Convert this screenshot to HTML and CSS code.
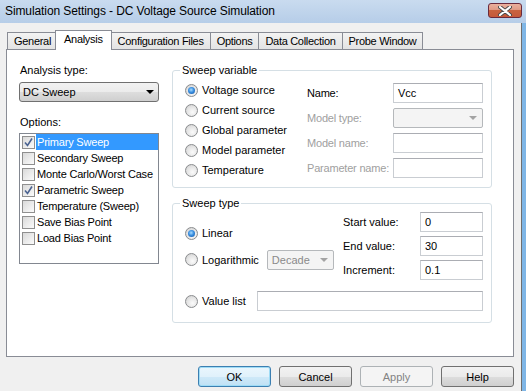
FILE: index.html
```html
<!DOCTYPE html>
<html lang="en">
<head>
  <meta charset="UTF-8">
  <title>Simulation Settings - DC Voltage Source Simulation</title>
  <link rel="stylesheet" href="styles.css">
</head>
<body>
  <div class="window">
    <!-- Title bar -->
    <div class="titlebar">
      <span class="title">Simulation Settings - DC Voltage Source Simulation</span>
      <div class="close">
        <svg width="14" height="10" viewBox="0 0 14 10">
          <path d="M2,1 L12,9 M12,1 L2,9" stroke="#4a4a4a" stroke-width="4" stroke-linecap="round"/>
          <path d="M2,1 L12,9 M12,1 L2,9" stroke="#fff" stroke-width="2.2" stroke-linecap="round"/>
        </svg>
      </div>
    </div>

    <div class="client">
      <!-- Tabs -->
      <div class="tabs">
        <div class="tab">General</div>
        <div class="tab active">Analysis</div>
        <div class="tab">Configuration Files</div>
        <div class="tab">Options</div>
        <div class="tab">Data Collection</div>
        <div class="tab">Probe Window</div>
      </div>

      <div class="panel">
        <!-- Left column -->
        <div class="left">
          <span class="caption">Analysis type:</span>
          <div class="select">
            <span>DC Sweep</span>
            <svg width="8" height="4" viewBox="0 0 8 4"><path d="M0,0 L8,0 L4,4 Z" fill="#000"/></svg>
          </div>
          <span class="caption options-caption">Options:</span>
          <ul class="listbox">
            <li class="item"><span class="check on"><svg width="11" height="11" viewBox="0 0 11 11"><path d="M2,5.5 L4.5,8.5 L9,1.5" fill="none" stroke="#4b6391" stroke-width="1.6"/></svg></span><span class="item-text selected">Primary Sweep</span></li>
            <li class="item"><span class="check"></span><span class="item-text">Secondary Sweep</span></li>
            <li class="item"><span class="check"></span><span class="item-text">Monte Carlo/Worst Case</span></li>
            <li class="item"><span class="check on"><svg width="11" height="11" viewBox="0 0 11 11"><path d="M2,5.5 L4.5,8.5 L9,1.5" fill="none" stroke="#4b6391" stroke-width="1.6"/></svg></span><span class="item-text">Parametric Sweep</span></li>
            <li class="item"><span class="check"></span><span class="item-text">Temperature (Sweep)</span></li>
            <li class="item"><span class="check"></span><span class="item-text">Save Bias Point</span></li>
            <li class="item"><span class="check"></span><span class="item-text">Load Bias Point</span></li>
          </ul>
        </div>

        <!-- Right column -->
        <div class="right">
          <fieldset class="group">
            <legend>Sweep variable</legend>
            <div class="var-body">
              <div class="radio-list">
                <div class="radio-row"><span class="radio on"></span>Voltage source</div>
                <div class="radio-row"><span class="radio"></span>Current source</div>
                <div class="radio-row"><span class="radio"></span>Global parameter</div>
                <div class="radio-row"><span class="radio"></span>Model parameter</div>
                <div class="radio-row"><span class="radio"></span>Temperature</div>
              </div>
              <div class="fields">
                <span>Name:</span>
                <div class="input">Vcc</div>
                <span class="disabled">Model type:</span>
                <div class="input combo-off">
                  <svg width="8" height="4" viewBox="0 0 8 4"><path d="M0,0 L8,0 L4,4 Z" fill="#a3a3a3"/></svg>
                </div>
                <span class="disabled">Model name:</span>
                <div class="input"></div>
                <span class="disabled">Parameter name:</span>
                <div class="input"></div>
              </div>
            </div>
          </fieldset>

          <fieldset class="group type-group">
            <legend>Sweep type</legend>
            <div class="type-body">
              <div class="type-top">
                <div class="type-left">
                  <div class="radio-row"><span class="radio on"></span>Linear</div>
                  <div class="radio-row log-row">
                    <span class="radio"></span>Logarithmic
                    <div class="decade">
                      <span>Decade</span>
                      <svg width="8" height="4" viewBox="0 0 8 4"><path d="M0,0 L8,0 L4,4 Z" fill="#a3a3a3"/></svg>
                    </div>
                  </div>
                </div>
                <div class="type-right">
                  <span>Start value:</span>
                  <div class="input">0</div>
                  <span>End value:</span>
                  <div class="input">30</div>
                  <span>Increment:</span>
                  <div class="input">0.1</div>
                </div>
              </div>
              <div class="type-bottom">
                <div class="radio-row"><span class="radio"></span>Value list</div>
                <div class="input value-list"></div>
              </div>
            </div>
          </fieldset>
        </div>
      </div>

      <!-- Dialog buttons -->
      <div class="buttons">
        <button class="btn default">OK</button>
        <button class="btn">Cancel</button>
        <button class="btn" disabled>Apply</button>
        <button class="btn">Help</button>
      </div>
    </div>
  </div>
</body>
</html>
```

FILE: styles.css
```css
* {
  box-sizing: border-box;
}
body {
  margin: 0;
  font-family: "Liberation Sans", Arial, sans-serif;
  font-size: 11px;
  color: #000;
  background: #f0f0f0;
}
.window {
  width: 526px;
  height: 391px;
  display: flex;
  flex-direction: column;
  background: #7fb6e6;
}

/* Title bar */
.titlebar {
  height: 23px;
  flex: none;
  display: flex;
  align-items: flex-start;
  justify-content: space-between;
  padding: 0 4px 0 5px;
  background: linear-gradient(#c9dbef, #b6cde8);
  font-size: 12px;
}
.title {
  line-height: 23px;
  letter-spacing: -0.1px;
}
.close {
  width: 34px;
  height: 15px;
  margin-top: 3px;
  border: 1px solid #6a2a3c;
  border-radius: 3px;
  background: linear-gradient(#eab09e 0%, #e09a86 45%, #c8623f 50%, #c5593a 100%);
  display: flex;
  align-items: center;
  justify-content: center;
}

/* Client area */
.client {
  flex: 1;
  margin-right: 4px;
  border-right: 1px solid #6f6f6f;
  background: #f0f0f0;
  padding: 7px 7px 0 6px;
}

/* Tabs */
.tabs {
  display: flex;
  align-items: flex-end;
  height: 19px;
  padding-left: 1px;
}
.tab {
  height: 17px;
  padding: 1px 6px 0;
  margin-right: -1px;
  border: 1px solid #898c95;
  border-bottom: none;
  background: linear-gradient(#f3f3f3, #e3e3e3);
  line-height: 14px;
  letter-spacing: -0.3px;
  white-space: nowrap;
}
.tab.active {
  height: 20px;
  margin: 0 -1px -1px -2px;
  padding: 1px 8px 0;
  background: #fff;
  position: relative;
  z-index: 1;
}

/* Panel */
.panel {
  height: 308px;
  border: 1px solid #898c95;
  background: #fff;
  display: grid;
  grid-template-columns: 140px 320px;
  column-gap: 13px;
  align-items: start;
  padding: 14px 0 0 12px;
}
.caption {
  display: block;
  line-height: 13px;
  padding-left: 1px;
}
.select {
  margin-top: 5px;
  height: 20px;
  border: 1px solid #707070;
  border-radius: 3px;
  background: linear-gradient(#f2f2f2 0%, #ebebeb 50%, #dddddd 51%, #cfcfcf 100%);
  display: flex;
  align-items: center;
  justify-content: space-between;
  padding: 0 4px 0 3px;
}
.options-caption {
  margin-top: 14px;
}
.listbox {
  margin: 4px 0 0;
  height: 131px;
  border: 1px solid #828790;
  list-style: none;
  padding: 0 0 0 2px;
}
.item {
  display: flex;
  align-items: center;
  height: 16px;
}
.check {
  width: 13px;
  height: 13px;
  flex: none;
  margin-right: 1px;
  border: 1px solid #8f8f8f;
  background: linear-gradient(135deg, #d9d9d9, #fbfbfb);
  display: flex;
}
.item-text {
  flex: 1;
  line-height: 16px;
  padding-left: 1px;
  white-space: nowrap;
  letter-spacing: -0.2px;
}
.item-text.selected {
  background: #3399ff;
  color: #fff;
}

/* Group boxes */
.group {
  margin: 0;
  padding: 0;
  min-width: 0;
  border: 1px solid #d5dfe5;
  border-radius: 3px;
}
.group legend {
  margin-left: 7px;
  padding: 0 2px;
  line-height: 13px;
}
.type-group {
  margin-top: 9px;
}
.var-body {
  display: flex;
  padding: 3px 8px 7px 12px;
}
.radio-list {
  width: 122px;
}
.radio-row {
  display: flex;
  align-items: center;
  gap: 4px;
  height: 20px;
  white-space: nowrap;
}
.radio {
  width: 13px;
  height: 13px;
  flex: none;
  border-radius: 50%;
  border: 1px solid #8a8c8e;
  background: radial-gradient(circle at 60% 65%, #fbfbfb 0%, #e4e4e4 55%, #c9c9c9 100%);
  display: flex;
  align-items: center;
  justify-content: center;
}
.radio.on::after {
  content: "";
  width: 7px;
  height: 7px;
  border-radius: 50%;
  background: radial-gradient(circle at 45% 40%, #a8dcff 0%, #3a8fe0 45%, #0e4f9e 100%);
}
.fields {
  display: grid;
  grid-template-columns: 86px 90px;
  grid-auto-rows: 20px;
  row-gap: 5px;
  align-items: center;
  margin-top: 3px;
}
.fields span {
  letter-spacing: -0.2px;
  white-space: nowrap;
}
.disabled {
  color: #a0a0a0;
}
.input {
  height: 20px;
  border: 1px solid #c9cdd2;
  border-top-color: #abadb3;
  background: #fff;
  padding: 0 4px;
  line-height: 18px;
}
.combo-off {
  background: #f4f4f4;
  border-color: #b5b8bb;
  border-radius: 2px;
  display: flex;
  align-items: center;
  justify-content: flex-end;
  padding-right: 5px;
}

/* Sweep type */
.type-body {
  padding: 2px 8px 11px 12px;
}
.type-top {
  display: flex;
}
.type-left {
  width: 158px;
  padding-top: 11px;
}
.log-row {
  margin-top: 6px;
  height: 21px;
}
.decade {
  margin-left: 4px;
  width: 67px;
  height: 20px;
  border: 1px solid #b5b8bb;
  border-radius: 2px;
  background: #f4f4f4;
  color: #8a8a8a;
  display: flex;
  align-items: center;
  justify-content: space-between;
  padding: 0 5px 0 4px;
}
.type-right {
  display: grid;
  grid-template-columns: 77px 63px;
  grid-auto-rows: 20px;
  row-gap: 4px;
  align-items: center;
}
.type-bottom {
  display: flex;
  align-items: center;
  margin-top: 11px;
  height: 20px;
}
.value-list {
  width: 226px;
  margin-left: auto;
}

/* Buttons */
.buttons {
  display: flex;
  justify-content: flex-end;
  gap: 8px;
  margin-top: 9px;
}
.btn {
  width: 73px;
  height: 21px;
  padding: 0;
  border: 1px solid #707070;
  border-radius: 3px;
  background: linear-gradient(#f2f2f2 0%, #ebebeb 50%, #dddddd 51%, #cfcfcf 100%);
  font-family: inherit;
  font-size: 11px;
  color: #000;
}
.btn.default {
  border-color: #3c7fb1;
  box-shadow: inset 0 0 0 1px #9fdcf6;
  background: linear-gradient(#eaf6fd 0%, #e0f1fb 50%, #cfe9f8 51%, #bfe1f5 100%);
}
.btn:disabled {
  border-color: #adb2b5;
  background: #f4f4f4;
  color: #838383;
}
```
